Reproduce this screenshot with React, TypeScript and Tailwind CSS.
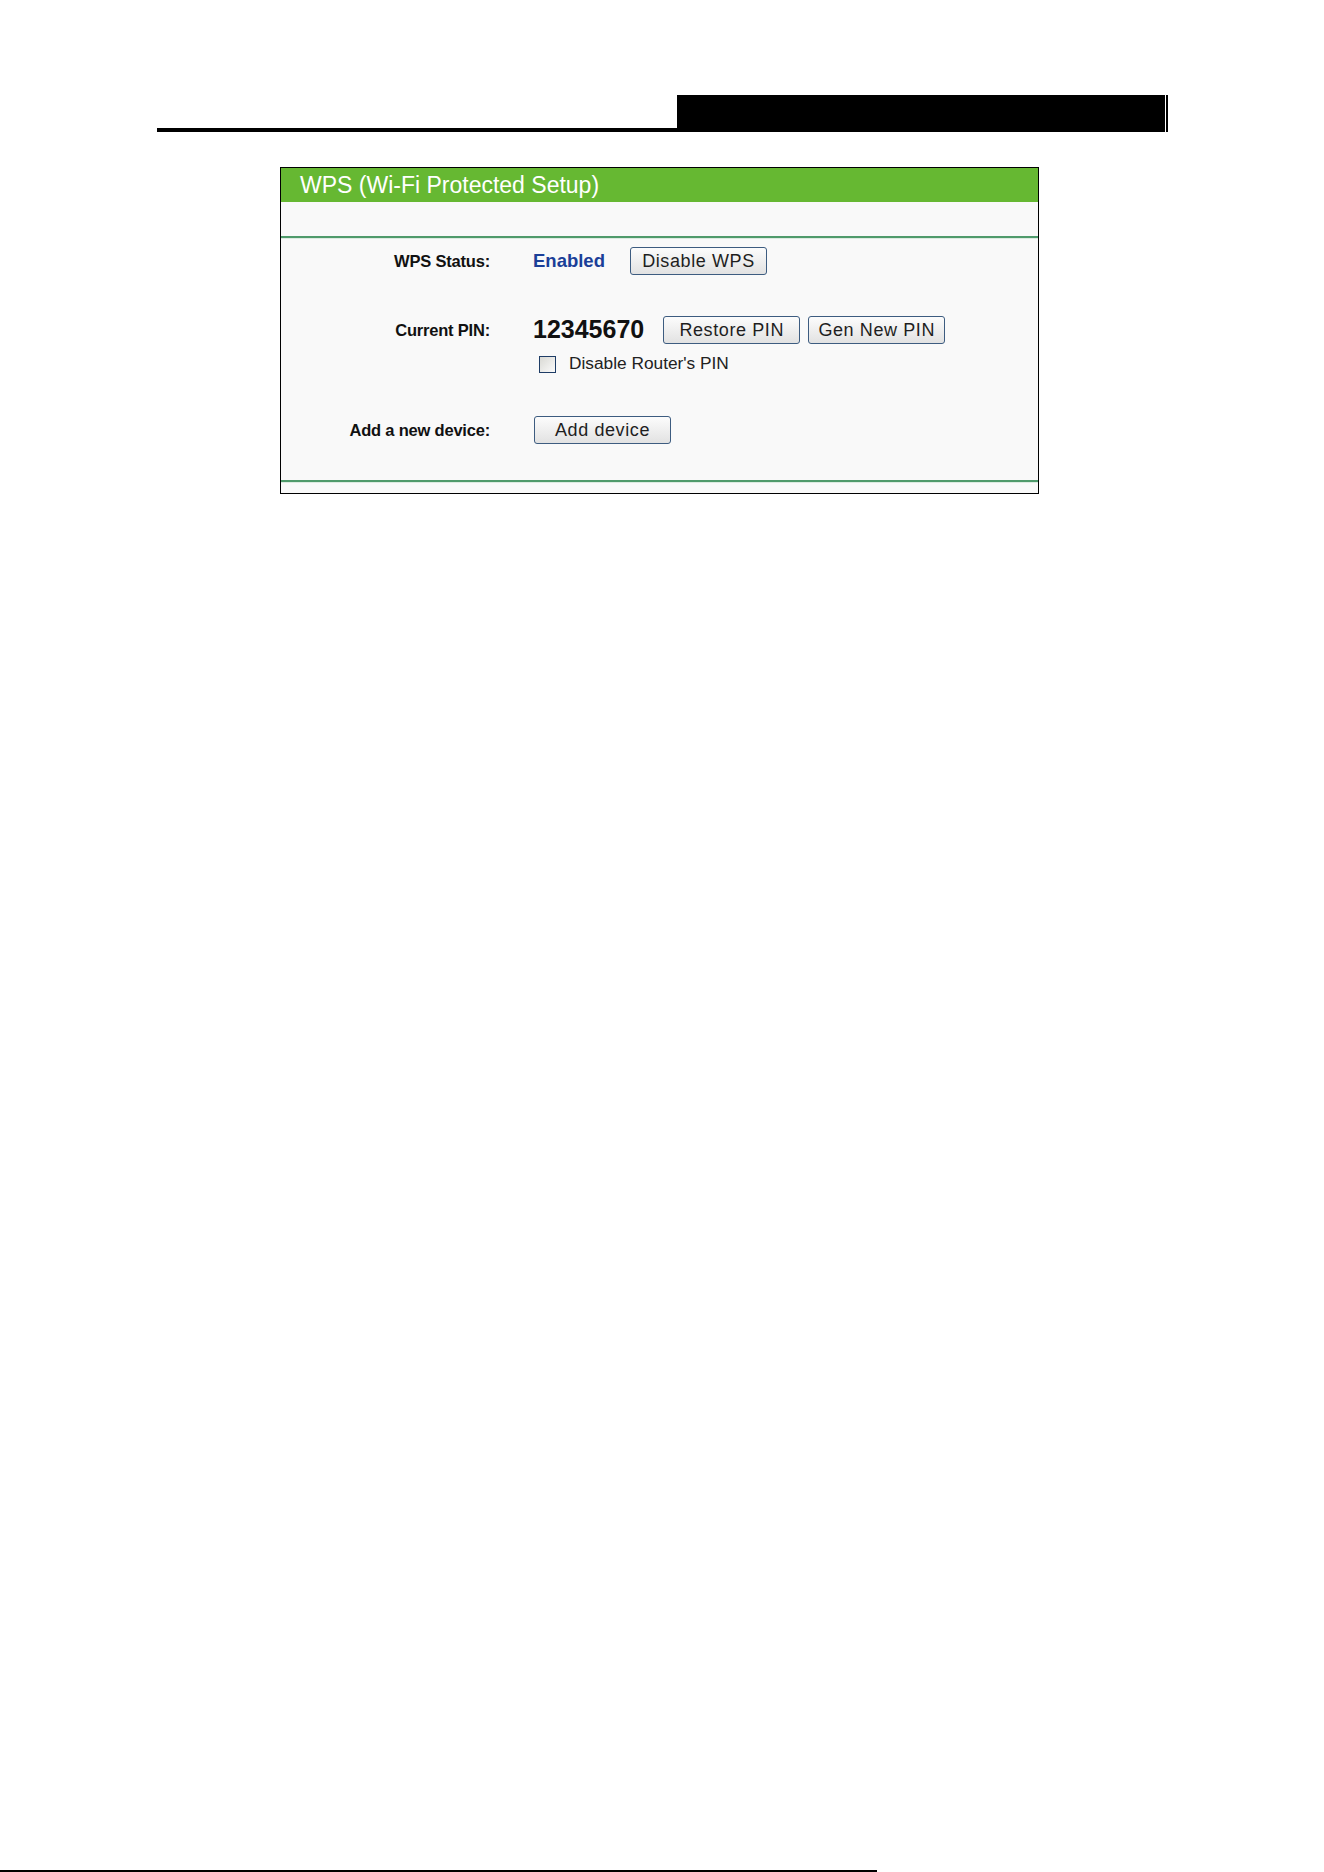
const FONT = { fontFamily: '"Liberation Sans", Arial, sans-serif' };

function Btn({ label, w }: { label: string; w: string }) {
  return (
    <button
      className={`flex h-[28px] ${w} shrink-0 items-center justify-center rounded-[3px] border border-[#3d5c80] bg-gradient-to-b from-[#fcfcfc] to-[#e2e2e2] text-[18px] tracking-[0.6px] text-[#1e1e1e]`}
    >
      {label}
    </button>
  );
}

function Row({ label, children }: { label: string; children: React.ReactNode }) {
  return (
    <div className="flex h-[28px] items-center">
      <div className="w-[209px] shrink-0 text-right text-[16.5px] font-bold tracking-[-0.2px] text-[#111]">{label}</div>
      <div className="ml-[43px] flex items-center">{children}</div>
    </div>
  );
}

export default function App() {
  return (
    <div style={FONT} className="flex h-[1872px] w-[1324px] flex-col bg-white">
      {/* running page header */}
      <div className="mx-auto mt-[95px] flex h-[37px] w-[1011px] items-end">
        <div className="h-[4px] w-[520px] bg-black" />
        <div className="h-[37px] w-[488px] bg-black" />
        <div className="ml-[1px] h-[37px] w-[2px] bg-black" />
      </div>

      <div className="ml-[280px] mt-[35px] w-[759px] border border-black bg-[#f9f9f9]">
        <div className="flex h-[34px] items-center bg-[#66b832] pl-[19px] text-[23px] text-white">
          WPS (Wi-Fi Protected Setup)
        </div>
        <div className="h-[34px]" />
        <div className="h-[2px] bg-[#4f9a6b]" />
        <div className="h-[1px] bg-[#dcebe1]" />

        <div className="pt-[8px]">
          <Row label="WPS Status:">
            <span className="text-[18.5px] font-bold text-[#1b3f98]">Enabled</span>
            <div className="ml-[25px]">
              <Btn label="Disable WPS" w="w-[137px]" />
            </div>
          </Row>

          <div className="mt-[41px]">
            <Row label="Current PIN:">
              <span className="text-[25px] font-bold text-[#111]">12345670</span>
              <div className="ml-[19px] flex gap-[8px]">
                <Btn label="Restore PIN" w="w-[137px]" />
                <Btn label="Gen New PIN" w="w-[137px]" />
              </div>
            </Row>
          </div>

          <div className="mt-[11px] flex h-[18px] items-center pl-[258px]">
            <span className="h-[17px] w-[17px] border border-[#1f3d66] bg-gradient-to-br from-[#d9d9d4] to-[#fbfbfb]" />
            <span className="ml-[13px] text-[17.3px] text-[#222]">Disable Router&apos;s PIN</span>
          </div>

          <div className="mt-[43px]">
            <Row label="Add a new device:">
              <div className="ml-[1px]">
                <Btn label="Add device" w="w-[137px]" />
              </div>
            </Row>
          </div>
        </div>

        <div className="mt-[36px] h-[2px] bg-[#4f9a6b]" />
        <div className="h-[1px] bg-[#dcebe1]" />
        <div className="h-[10px]" />
      </div>

      <div className="mt-auto h-[2px] w-[877px] bg-black" />
    </div>
  );
}
